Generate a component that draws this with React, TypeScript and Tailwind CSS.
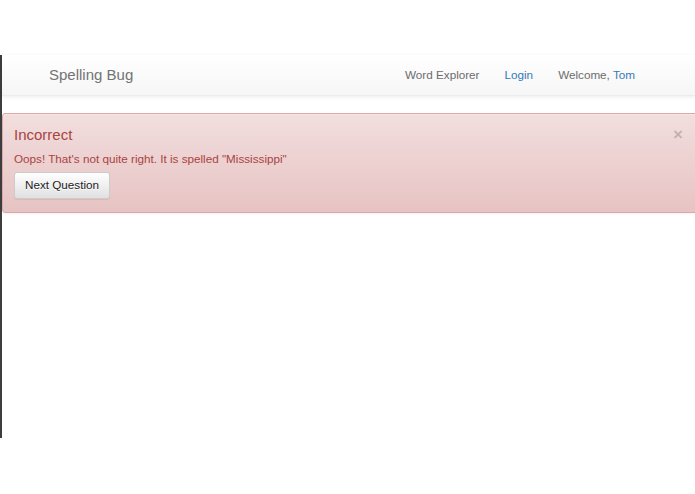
export default function App() {
  return (
    <div className="h-[494px] bg-white pt-[55px] font-['Liberation_Sans',Arial,sans-serif] overflow-hidden">
      <div className="h-[383px] border-l-2 border-[#3d3d3d]">
        {/* Navbar */}
        <nav className="h-[41px] flex items-center justify-between bg-linear-to-b from-white to-[#f6f6f6] border-b border-[#ececec] shadow-[0_1px_4px_rgba(0,0,0,0.08)] pl-[47px] pr-[60px]">
          <span className="text-[15px] text-[#737373]">Spelling Bug</span>
          <div className="flex items-center gap-[25px] text-[11.7px]">
            <span className="text-[#6c6c6c]">Word Explorer</span>
            <span className="text-[#337ab7]">Login</span>
            <span className="text-[#6c6c6c]">
              Welcome, <span className="text-[#337ab7]">Tom</span>
            </span>
          </div>
        </nav>

        {/* Alert */}
        <div className="mt-[17px] -mr-[10px] border border-[#dca7a7] rounded-[3px] bg-linear-to-b from-[#f2dede] to-[#e7c3c3] shadow-[inset_0_1px_0_rgba(255,255,255,0.25),0_1px_2px_rgba(0,0,0,0.05)] pt-[12px] pb-[13px] pl-[11px] pr-[21px] text-[#a94442]">
          <div className="flex items-start justify-between">
            <h4 className="text-[15px] leading-[17px]">Incorrect</h4>
            <span className="text-[17px] leading-[17px] font-bold text-black/20">×</span>
          </div>
          <p className="mt-[8px] text-[11.7px] leading-[16.6px]">
            Oops! That's not quite right. It is spelled "Mississippi"
          </p>
          <button className="mt-[4px] h-[27px] px-[10px] text-[11.7px] text-[#222] rounded-[3px] border border-[#ccc] bg-linear-to-b from-white to-[#e0e0e0] shadow-[0_1px_1px_rgba(0,0,0,0.075)] [text-shadow:0_1px_0_#fff]">
            Next Question
          </button>
        </div>
      </div>
    </div>
  )
}
